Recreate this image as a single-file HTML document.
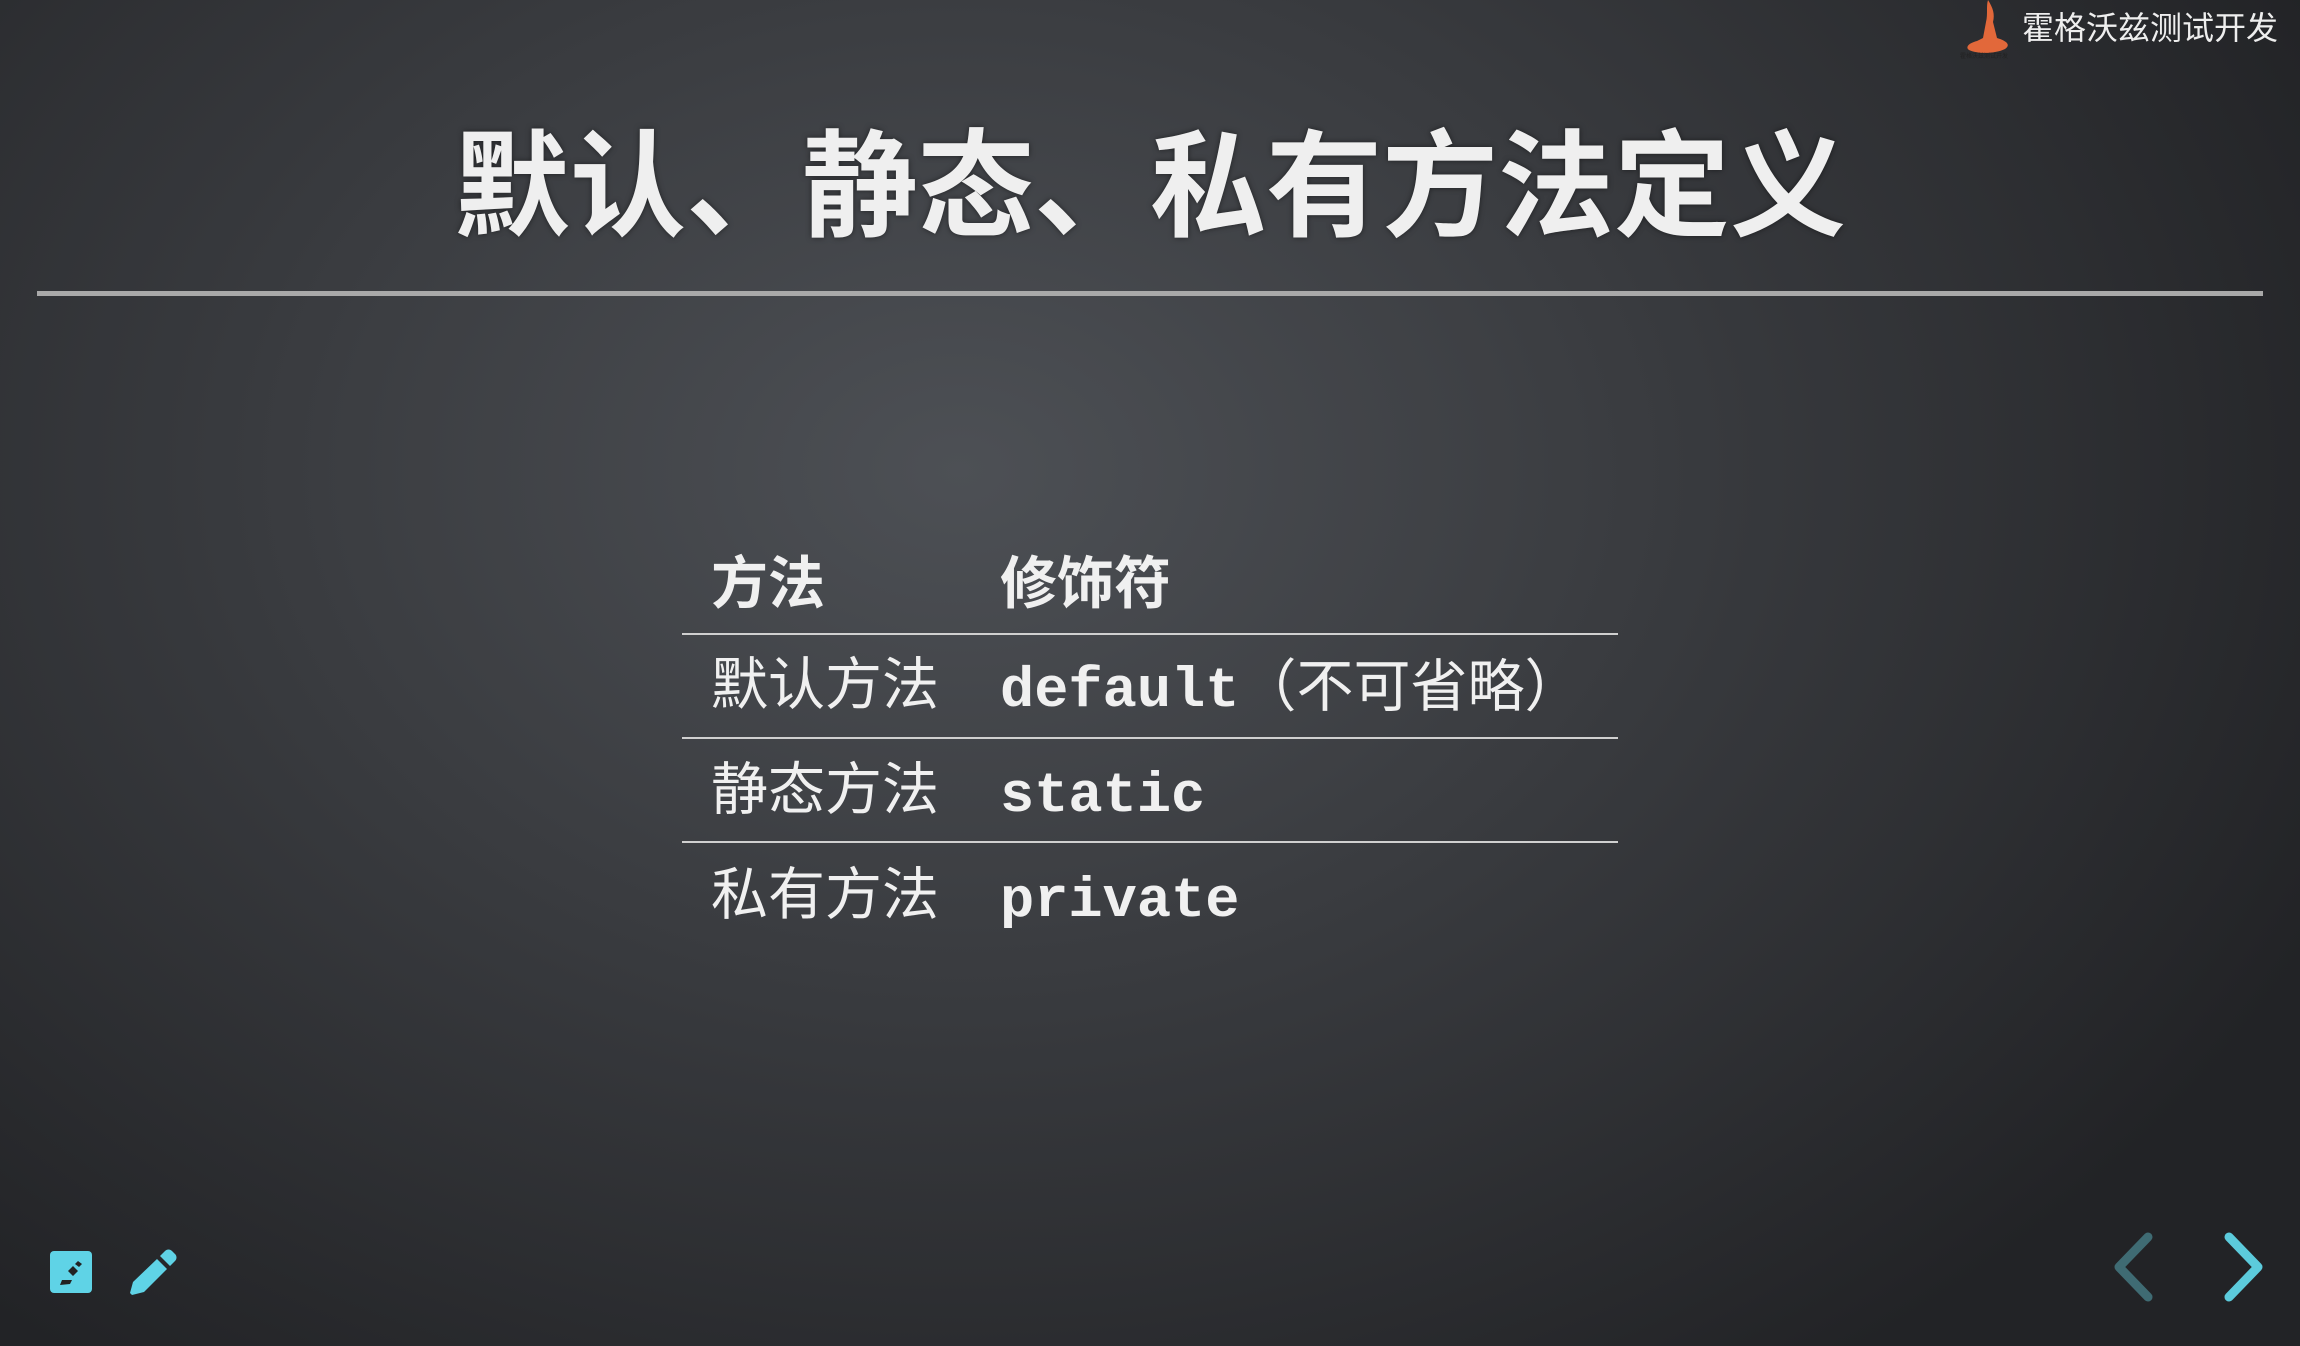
<!DOCTYPE html>
<html><head><meta charset="utf-8"><style>
html,body{margin:0;padding:0}
body{width:2300px;height:1346px;overflow:hidden;position:relative;
background:radial-gradient(ellipse 1500px 1100px at 960px 470px,#4d5055 0%,#3a3c40 45%,#222326 100%);
font-family:"Liberation Sans","Noto Sans CJK SC",sans-serif;color:#eeeeee}
.title{position:absolute;left:0;width:2300px;top:117px;text-align:center;font-size:116px;font-weight:bold;line-height:140px;color:#efefef;text-shadow:0 0 6px rgba(0,0,0,.5)}
.hr{position:absolute;left:37px;width:2226px;top:291px;height:5px;background:#a9a9a9}
.logo{position:absolute;left:2022px;top:8px;font-size:32px;line-height:40px;color:#eee}
.t{position:absolute;font-size:57px;line-height:70px;color:#f0f0f0}
.m{font-family:"Liberation Mono","Noto Sans CJK SC",monospace;margin-top:7px}
.mb{font-weight:bold;font-family:"Liberation Mono",monospace}
.b{font-weight:bold}
.ln{position:absolute;left:682px;width:936px;height:2px;background:#d0d0d0}
</style></head><body>
<div class="title">默认、静态、私有方法定义</div>
<div class="hr"></div>
<svg style="position:absolute;left:1955px;top:0" width="70" height="62" viewBox="0 0 70 62">
<path d="M33 0 C38 8 40 14 38 22 L42 38 C52 41 56 45 50 49 C40 54 22 54 14 50 C10 47 14 43 22 41 L28 38 L31 22 C33 14 31 6 33 0Z" fill="#e2683a"/>
<text x="5" y="58" font-size="6" fill="#222">霍格沃兹测试开发</text>
</svg>
<div class="logo">霍格沃兹测试开发</div>

<div class="t b" style="left:711px;top:549px">方法</div>
<div class="t b" style="left:1000px;top:549px">修饰符</div>
<div class="ln" style="top:633px"></div>
<div class="t" style="left:711px;top:650px">默认方法</div>
<div class="t m" style="left:1000px;top:650px"><span class="mb">default</span>（不可省略）</div>
<div class="ln" style="top:737px"></div>
<div class="t" style="left:711px;top:755px">静态方法</div>
<div class="t m mb" style="left:1000px;top:755px">static</div>
<div class="ln" style="top:841px"></div>
<div class="t" style="left:711px;top:860px">私有方法</div>
<div class="t m mb" style="left:1000px;top:860px">private</div>

<svg style="position:absolute;left:50px;top:1250px" width="42" height="44" viewBox="0 0 42 44">
<rect x="0" y="1" width="42" height="42" rx="4" fill="#5fd3e6"/>
<path d="M18 21 L23 16 L28 21 L23 26Z M10 35 L12 30 L22 30 L20 34Z" fill="#222"/>
<path d="M25 14 L28 11 L32 14 L29 17Z" fill="#222"/>
</svg>
<svg style="position:absolute;left:128px;top:1247px" width="52" height="52" viewBox="0 0 52 52">
<path d="M37 4 C39 2 42 2 44 4 L47 7 C49 9 49 12 47 14 L42 19 L32 9Z M29 12 L39 22 L16 45 L4 48 L2 46 L5 35Z" fill="#5fd3e6"/>
</svg>
<svg style="position:absolute;left:2108px;top:1228px" width="60" height="78" viewBox="0 0 60 78">
<path d="M40 9 L11 39 L40 69" fill="none" stroke="#3f6b73" stroke-width="9" stroke-linecap="round" stroke-linejoin="round"/>
</svg>
<svg style="position:absolute;left:2218px;top:1228px" width="60" height="78" viewBox="0 0 60 78">
<path d="M11 9 L40 39 L11 69" fill="none" stroke="#5ccbdc" stroke-width="9" stroke-linecap="round" stroke-linejoin="round"/>
</svg>
</body></html>
